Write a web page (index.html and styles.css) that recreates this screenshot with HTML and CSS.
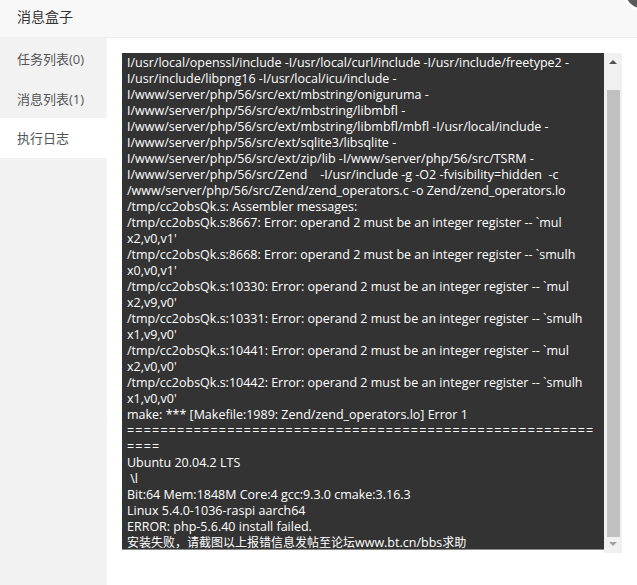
FILE: index.html
```html
<!DOCTYPE html>
<html lang="zh-CN">
<head>
<meta charset="utf-8">
<title>消息盒子</title>
<link rel="stylesheet" href="styles.css">
</head>
<body>
<div class="layer">
  <div class="title">消息盒子</div>
  <span class="close"></span>
  <div class="main">
    <ul class="tabs">
      <li>任务列表(0)</li>
      <li>消息列表(1)</li>
      <li class="on">执行日志</li>
    </ul>
    <div class="pane">
      <div class="logbox">
<pre class="log">I/usr/local/openssl/include -I/usr/local/curl/include -I/usr/include/freetype2 -
I/usr/include/libpng16 -I/usr/local/icu/include -
I/www/server/php/56/src/ext/mbstring/oniguruma -
I/www/server/php/56/src/ext/mbstring/libmbfl -
I/www/server/php/56/src/ext/mbstring/libmbfl/mbfl -I/usr/local/include -
I/www/server/php/56/src/ext/sqlite3/libsqlite -
I/www/server/php/56/src/ext/zip/lib -I/www/server/php/56/src/TSRM -
I/www/server/php/56/src/Zend    -I/usr/include -g -O2 -fvisibility=hidden  -c
/www/server/php/56/src/Zend/zend_operators.c -o Zend/zend_operators.lo
/tmp/cc2obsQk.s: Assembler messages:
/tmp/cc2obsQk.s:8667: Error: operand 2 must be an integer register -- `mul
x2,v0,v1'
/tmp/cc2obsQk.s:8668: Error: operand 2 must be an integer register -- `smulh
x0,v0,v1'
/tmp/cc2obsQk.s:10330: Error: operand 2 must be an integer register -- `mul
x2,v9,v0'
/tmp/cc2obsQk.s:10331: Error: operand 2 must be an integer register -- `smulh
x1,v9,v0'
/tmp/cc2obsQk.s:10441: Error: operand 2 must be an integer register -- `mul
x2,v0,v0'
/tmp/cc2obsQk.s:10442: Error: operand 2 must be an integer register -- `smulh
x1,v0,v0'
make: *** [Makefile:1989: Zend/zend_operators.lo] Error 1
<span class="rule">========================================================
====</span>
Ubuntu 20.04.2 LTS
 \l
Bit:64 Mem:1848M Core:4 gcc:9.3.0 cmake:3.16.3
Linux 5.4.0-1036-raspi aarch64
ERROR: php-5.6.40 install failed.
<span class="cn">安装失败，请截图以上报错信息发帖至论坛</span>www.bt.cn/bbs<span class="cn">求助</span></pre>
      </div>
      <div class="sbar">
        <span class="arr up"></span>
        <span class="thumb"></span>
        <span class="arr down"></span>
      </div>
    </div>
  </div>
</div>
</body>
</html>
```

FILE: styles.css
```css
*{box-sizing:border-box;}
html,body{margin:0;height:100%;background:#fff;}
body{ font-family:"Open Sans","Noto Sans CJK SC",sans-serif; color:#333; overflow:hidden; }

.layer{ position:relative; height:100%; display:flex; flex-direction:column; }
.title{ height:38px; line-height:34px; padding-left:17px; font-size:14px; color:#333; background:#f8f8f8; border-bottom:1px solid #eee; }
/* 右上角关闭按钮，只露出一角 */
.close{ position:absolute; right:-22px; top:-25px; width:36px; height:36px; border-radius:50%; background:#5a5a5a; border:3px solid #fff; }

.main{ flex:1; display:flex; min-height:0; }
.tabs{ width:107px; margin:0; padding:0; list-style:none; background:#f2f2f2; }
.tabs li{ height:40px; line-height:42px; padding-left:17px; font-size:13px; color:#555; }
.tabs li.on{ background:#fff; line-height:40px; }

.pane{ flex:1; display:flex; align-items:flex-start; padding:15px 0 0 15px; }
.logbox{ width:482px; height:497px; background:#333; border-bottom:1px solid #8a8a8a; overflow:hidden; }
.log{ margin:0; padding:2px 0 0 5px; font-family:"Open Sans","Noto Sans CJK SC",sans-serif; font-size:12.5px; line-height:16px; color:#fff; white-space:pre; }
.log .rule{ letter-spacing:1.2px; }
.log .cn{ font-size:12px; }

.sbar{ width:18px; height:500px; background:#f0f0f0; display:flex; flex-direction:column; align-items:center; }
.arr{ width:0; height:0; border-left:4px solid transparent; border-right:4px solid transparent; }
.arr.up{ margin-top:7px; border-bottom:4px solid #505050; }
.arr.down{ margin-top:5px; border-top:4px solid #a3a3a3; }
.thumb{ width:13px; height:447px; margin-top:26px; background:#c1c1c1; }
```
